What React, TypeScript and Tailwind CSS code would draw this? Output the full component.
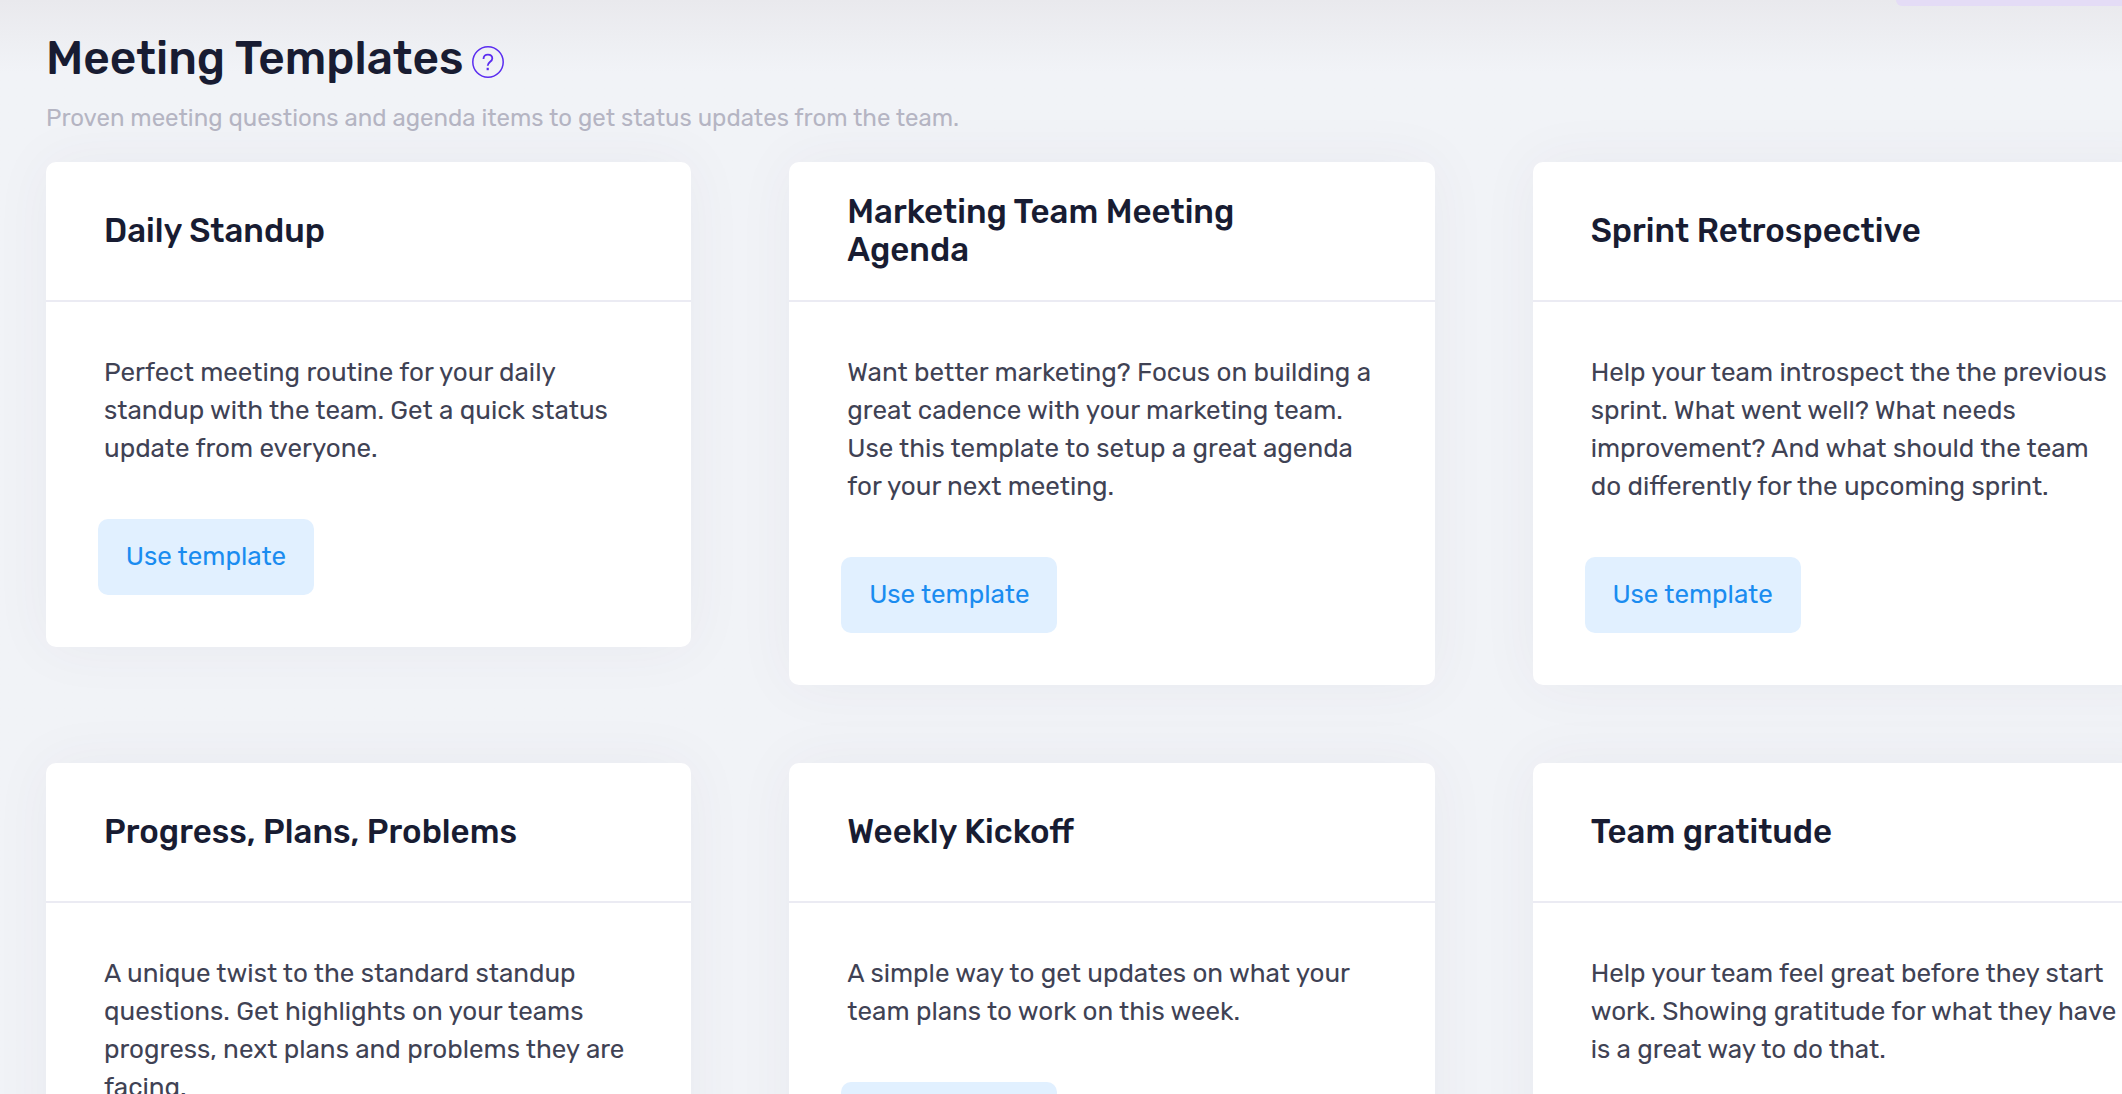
import React from 'react';

interface Template {
  id: string;
  title: string;
  description: string;
}

const templates: Template[] = [
  {
    id: 'daily-standup',
    title: 'Daily Standup',
    description:
      'Perfect meeting routine for your daily standup with the team. Get a quick status update from everyone.',
  },
  {
    id: 'marketing-agenda',
    title: 'Marketing Team Meeting Agenda',
    description:
      'Want better marketing? Focus on building a great cadence with your marketing team. Use this template to setup a great agenda for your next meeting.',
  },
  {
    id: 'sprint-retrospective',
    title: 'Sprint Retrospective',
    description:
      'Help your team introspect the the previous sprint. What went well? What needs improvement? And what should the team do differently for the upcoming sprint.',
  },
  {
    id: 'ppp',
    title: 'Progress, Plans, Problems',
    description:
      'A unique twist to the standard standup questions. Get highlights on your teams progress, next plans and problems they are facing.',
  },
  {
    id: 'weekly-kickoff',
    title: 'Weekly Kickoff',
    description: 'A simple way to get updates on what your team plans to work on this week.',
  },
  {
    id: 'team-gratitude',
    title: 'Team gratitude',
    description:
      'Help your team feel great before they start work. Showing gratitude for what they have is a great way to do that.',
  },
];

const HelpIcon: React.FC = () => (
  <svg viewBox="0 0 32 32" className="size-8" fill="none" stroke="currentColor">
    <circle cx="16" cy="16" r="15.2" strokeWidth="1.5" />
    <path d="M11.5 12.9c0-2.7 1.8-4.3 4.4-4.3s4.4 1.5 4.4 3.8c0 3.3-4.6 3.6-4.6 7.4" strokeWidth="1.8" />
    <path d="M15.7 21.8v2.4" strokeWidth="2.2" />
  </svg>
);

const TemplateCard: React.FC<{ template: Template }> = ({ template }) => (
  <article className="rounded-[10px] bg-white shadow-[0_0_60px_rgba(82,63,105,0.05)]">
    <div className="flex h-[140px] items-center border-b-2 border-[#ebebf3] pr-20 pl-[58px]">
      <h2 className="text-[33px] leading-[38px] font-medium text-[#181c32]">{template.title}</h2>
    </div>
    <div className="px-[58px] py-[52px]">
      <p className="text-[26px] leading-[38px] text-[#3f4254]">{template.description}</p>
      <button
        type="button"
        className="mt-[51px] -ml-1.5 block h-[76px] w-[216px] rounded-[10px] bg-[#e1f0ff] pb-0.5 text-[26px] text-[#1a8cf0]"
      >
        Use template
      </button>
    </div>
  </article>
);

const App: React.FC = () => {
  return (
    <div className="h-screen overflow-hidden bg-[#f1f3f7] font-[Rubik,Roboto,sans-serif]">
      <div className="bg-linear-to-b from-[#e9e9ed] to-[#f1f3f7] to-[72px]">
        {/* Lower edge of the banner above the page */}
        <div className="ml-auto h-1.5 w-[226px] rounded-bl-[10px] bg-[#e4dcf6]" />

        <main className="px-[46px] pt-[25px]">
          <header>
            <div className="flex items-center gap-2">
              <h1 className="text-[46px] leading-[56px] font-medium text-[#181c32]">Meeting Templates</h1>
              <button type="button" aria-label="Help" className="mt-1.5 text-[#5a2cf0]">
                <HelpIcon />
              </button>
            </div>
            <p className="mt-3 text-[24px] leading-[38px] text-[#b5b5c3]">
              Proven meeting questions and agenda items to get status updates from the team.
            </p>
          </header>

          {/* Template grid runs past the right edge */}
          <div className="mt-[25px] -mr-[102px] grid grid-cols-3 items-start gap-x-[98px] gap-y-[78px]">
            {templates.map((template) => (
              <TemplateCard key={template.id} template={template} />
            ))}
          </div>
        </main>
      </div>
    </div>
  );
};

export default App;
